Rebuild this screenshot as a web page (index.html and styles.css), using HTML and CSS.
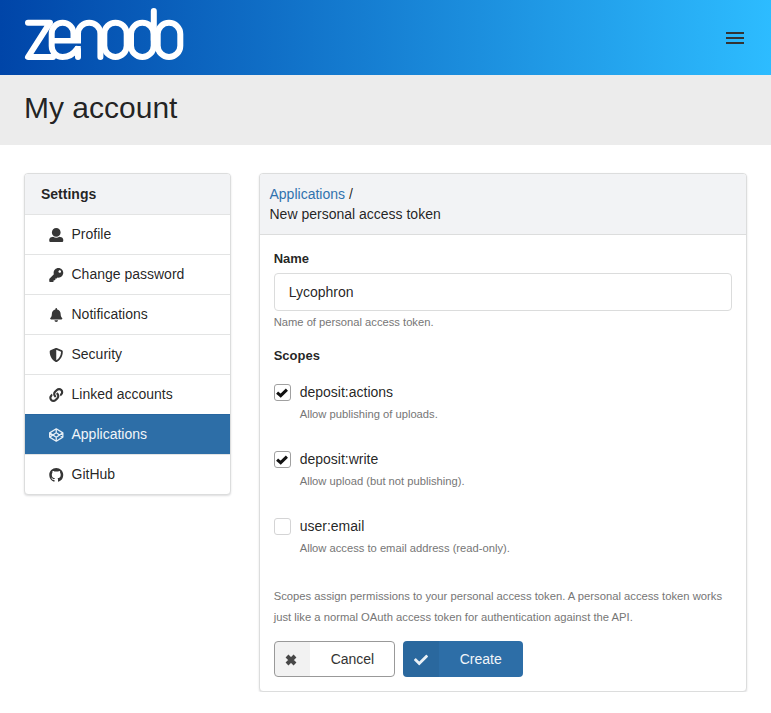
FILE: index.html
```html
<!DOCTYPE html>
<html lang="en">
<head>
<meta charset="utf-8">
<title>New personal access token</title>
<link rel="stylesheet" href="styles.css">
</head>
<body>
<header class="topbar">
  <svg class="logo" width="162" height="56" viewBox="0 0 162 56" role="img" aria-label="zenodo">
    <g fill="none" stroke="#fff" stroke-width="6" stroke-linecap="round" stroke-linejoin="round">
      <path d="M5 16.700H27L5 51H30"/>
      <path d="M50.500 34V27.700A10.900 11 0 0 0 28.700 27.700V40A10.900 11 0 0 0 39.600 51Q48.500 51 54 43"/>
      <path d="M55 34V27.700A11.200 11 0 0 1 77.400 27.700V51"/>
      <path d="M28.700 34.700H58M55 40V46" stroke-width="5.500" stroke-linecap="butt"/>
      <path d="M55 44V51"/>
      <rect x="81.300" y="16.700" width="22.400" height="34.300" rx="11.200"/>
      <rect x="108" y="16.700" width="22.700" height="34.300" rx="11.350"/>
      <path d="M130.800 5V34"/>
      <rect x="134.700" y="16.700" width="22.600" height="34.300" rx="11.300"/>
    </g>
  </svg>
  <button class="menu-toggle" aria-label="Menu"><span></span><span></span><span></span></button>
</header>
<div class="page-title"><h1>My account</h1></div>
<main class="layout">
  <nav class="card sidebar">
    <div class="sidebar-head">Settings</div>
    <a class="item"><svg class="icon" viewBox="0 0 512 512"><path d="M256 0c88.366 0 160 71.634 160 160s-71.634 160-160 160S96 248.366 96 160 167.634 0 256 0zm183.283 333.821l-71.313-17.828c-74.923 53.890-165.738 41.864-223.940 0l-71.313 17.828C29.981 344.505 0 382.903 0 426.955V464c0 26.510 21.490 48 48 48h416c26.510 0 48-21.490 48-48v-37.045c0-44.052-29.981-82.450-72.717-93.134z"/></svg>Profile</a>
    <a class="item"><svg class="icon" viewBox="0 0 512 512"><path d="M512 176.001C512 273.203 433.202 352 336 352c-11.220 0-22.190-1.062-32.827-3.069l-24.012 27.014A23.999 23.999 0 0 1 261.223 384H224v40c0 13.255-10.745 24-24 24h-40v40c0 13.255-10.745 24-24 24H24c-13.255 0-24-10.745-24-24v-78.059c0-6.365 2.529-12.470 7.029-16.971l161.802-161.802C163.108 213.814 160 195.271 160 176 160 78.798 238.797.001 335.999 0 433.488-.001 512 78.511 512 176.001zM336 128c0 26.510 21.490 48 48 48s48-21.490 48-48-21.490-48-48-48-48 21.490-48 48z"/></svg>Change password</a>
    <a class="item"><svg class="icon" viewBox="0 0 448 512"><path d="M224 512c35.320 0 63.970-28.650 63.970-64H160.030c0 35.350 28.650 64 63.970 64zm215.390-149.710c-19.320-20.760-55.470-51.990-55.470-154.290 0-77.700-54.480-139.900-127.940-155.160V32c0-17.670-14.320-32-31.980-32s-31.980 14.330-31.980 32v20.840C118.560 68.100 64.080 130.300 64.080 208c0 102.300-36.150 133.530-55.470 154.290-6 6.450-8.660 14.160-8.610 21.710.11 16.400 12.980 32 32.100 32h383.800c19.120 0 32-15.600 32.100-32 .05-7.550-2.610-15.270-8.610-21.710z"/></svg>Notifications</a>
    <a class="item"><svg class="icon" viewBox="0 0 512 512"><path d="M466.500 83.700l-192-80a48.150 48.150 0 0 0-36.900 0l-192 80C27.700 91.100 16 108.600 16 128c0 198.500 114.500 335.700 221.500 380.300 11.800 4.900 25.100 4.900 36.900 0C360.100 472.600 496 349.300 496 128c0-19.400-11.700-36.900-29.500-44.300zM256.100 446.300l-.1-381 175.900 73.300c-3.300 151.400-82.100 261.100-175.800 307.700z"/></svg>Security</a>
    <a class="item"><svg class="icon" viewBox="0 0 512 512"><path d="M326.612 185.391c59.747 59.809 58.927 155.698.36 214.590-.11.12-.24.25-.36.37l-67.200 67.200c-59.270 59.270-155.699 59.262-214.960 0-59.270-59.260-59.270-155.700 0-214.960l37.106-37.106c9.840-9.840 26.786-3.300 27.294 10.606.648 17.722 3.826 35.527 9.690 52.721 1.986 5.822.567 12.262-3.783 16.612l-13.087 13.087c-28.026 28.026-28.905 73.660-1.155 101.960 28.024 28.579 74.086 28.749 102.325.51l67.200-67.190c28.191-28.191 28.073-73.757 0-101.830-3.701-3.694-7.429-6.564-10.341-8.569a16.037 16.037 0 0 1-6.947-12.606c-.396-10.567 3.348-21.456 11.698-29.806l21.054-21.055c5.521-5.521 14.182-6.199 20.584-1.731a152.482 152.482 0 0 1 20.522 17.197zM467.547 44.449c-59.261-59.262-155.690-59.270-214.960 0l-67.200 67.200c-.12.12-.25.25-.36.37-58.566 58.892-59.387 154.781.36 214.590a152.454 152.454 0 0 0 20.521 17.196c6.402 4.468 15.064 3.789 20.584-1.731l21.054-21.055c8.350-8.350 12.094-19.239 11.698-29.806a16.037 16.037 0 0 0-6.947-12.606c-2.912-2.005-6.640-4.875-10.341-8.569-28.073-28.073-28.191-73.639 0-101.830l67.200-67.190c28.239-28.239 74.300-28.069 102.325.51 27.750 28.300 26.872 73.934-1.155 101.960l-13.087 13.087c-4.350 4.350-5.769 10.790-3.783 16.612 5.864 17.194 9.042 34.999 9.690 52.721.509 13.906 17.454 20.446 27.294 10.606l37.106-37.106c59.271-59.259 59.271-155.699.001-214.959z"/></svg>Linked accounts</a>
    <a class="item active"><svg class="icon codepen" viewBox="0 0 14 14"><path d="M7 .8L13.600 4.900V9.100L7 13.200.4 9.100V4.900ZM7 .8V4.800M7 9.200V13.200M.4 4.900L7 9.200 13.600 4.900M.4 9.100L7 4.800 13.600 9.100"/></svg>Applications</a>
    <a class="item"><svg class="icon" viewBox="0 0 16 16"><path d="M8 0C3.580 0 0 3.580 0 8c0 3.540 2.290 6.530 5.470 7.590.4.07.55-.17.55-.38 0-.19-.01-.82-.01-1.490-2.010.37-2.530-.49-2.690-.94-.09-.23-.48-.94-.82-1.130-.28-.15-.68-.52-.01-.53.63-.01 1.080.58 1.230.82.72 1.210 1.870.87 2.330.66.07-.52.28-.87.51-1.070-1.780-.2-3.640-.89-3.640-3.950 0-.87.31-1.590.82-2.150-.08-.2-.36-1.020.08-2.120 0 0 .67-.21 2.200.82.64-.18 1.320-.27 2-.27s1.360.09 2 .27c1.530-1.040 2.200-.82 2.200-.82.44 1.100.16 1.920.08 2.120.51.56.82 1.270.82 2.150 0 3.070-1.870 3.750-3.650 3.950.29.25.54.73.54 1.480 0 1.070-.01 1.930-.01 2.200 0 .21.15.46.55.38A8.010 8.010 0 0 0 16 8c0-4.420-3.580-8-8-8z"/></svg>GitHub</a>
  </nav>
  <section class="card panel">
    <div class="panel-head"><a class="link">Applications</a> /<br>New personal access token</div>
    <form class="panel-body">
      <label class="label" for="name">Name</label>
      <input class="input" id="name" type="text" value="Lycophron">
      <p class="help name-help">Name of personal access token.</p>
      <div class="label scopes-label">Scopes</div>
      <div class="scope">
        <span class="box checked"><svg viewBox="0 0 12 10"><path d="M1.100 4.600L4.700 7.700 10.900 1.700"/></svg></span>
        <div><div class="scope-name">deposit:actions</div><p class="help">Allow publishing of uploads.</p></div>
      </div>
      <div class="scope">
        <span class="box checked"><svg viewBox="0 0 12 10"><path d="M1.100 4.600L4.700 7.700 10.900 1.700"/></svg></span>
        <div><div class="scope-name">deposit:write</div><p class="help">Allow upload (but not publishing).</p></div>
      </div>
      <div class="scope">
        <span class="box"></span>
        <div><div class="scope-name">user:email</div><p class="help">Allow access to email address (read-only).</p></div>
      </div>
      <p class="help note">Scopes assign permissions to your personal access token. A personal access token works just like a normal OAuth access token for authentication against the API.</p>
      <div class="actions">
        <button type="button" class="btn cancel"><span class="btn-icon"><svg class="times" viewBox="0 0 12 12"><path d="M2 2L10 10M10 2L2 10"/></svg></span><span class="btn-text">Cancel</span></button>
        <button type="button" class="btn create"><span class="btn-icon"><svg class="check" viewBox="0 0 512 512"><path d="M173.898 439.404l-166.400-166.400c-9.997-9.997-9.997-26.206 0-36.204l36.203-36.204c9.997-9.998 26.207-9.998 36.204 0L192 312.690 432.095 72.596c9.997-9.997 26.207-9.997 36.204 0l36.203 36.204c9.997 9.997 9.997 26.206 0 36.204l-294.400 294.401c-9.998 9.997-26.207 9.997-36.204-.001z"/></svg></span><span class="btn-text">Create</span></button>
      </div>
    </form>
  </section>
</main>
</body>
</html>
```
FILE: styles.css
```css
* { box-sizing: border-box; }
body {
  margin: 0;
  background: #fff;
  color: rgba(0, 0, 0, .87);
  font: 14px/20px "Liberation Sans", Arial, sans-serif;
}
p, h1 { margin: 0; }
.topbar {
  height: 75px;
  padding: 0 27px 0 23px;
  display: flex;
  align-items: center;
  justify-content: space-between;
  background: linear-gradient(90deg, #0045a8, #2dbcff);
}
.logo { display: block; margin-top: -7px; }
.menu-toggle {
  display: flex;
  flex-direction: column;
  gap: 3px;
  padding: 0;
  border: 0;
  background: none;
}
.menu-toggle span { width: 18px; height: 2px; background: #333; }
.page-title {
  height: 70px;
  padding: 15px 24px;
  background: #ececec;
}
h1 { font-size: 30px; line-height: 36px; font-weight: 400; }
.layout {
  display: grid;
  grid-template-columns: 207px 488px;
  gap: 28px;
  align-items: start;
  padding: 28px 24px 0;
}
.card {
  border: 1px solid #dcdddd;
  border-radius: 4px;
  background: #fff;
  box-shadow: 0 1px 2px rgba(34, 36, 38, .15);
  overflow: hidden;
}
.sidebar-head {
  height: 40px;
  padding: 10px 16px;
  background: #f2f3f5;
  font-weight: 700;
}
.item {
  display: flex;
  align-items: center;
  height: 40px;
  padding: 0 24px 2px;
  border-top: 1px solid #e3e4e4;
}
.icon { width: 14.500px; height: 14px; margin: 2px 8px 0 0; fill: #363636; }
.active { background: #2d6ea7; border-color: #2766a0; color: #f1f5f9; }
.codepen { overflow: visible; fill: none; stroke: #e6eef5; stroke-width: 1.300; stroke-linejoin: round; }
.panel-head {
  height: 61px;
  padding: 10px 9.500px;
  background: #f2f3f5;
  border-bottom: 1px solid #dcdddd;
}
.link { color: #3072ae; }
.panel-body { padding: 14px 14px 14px 13.700px; }
.label { display: block; font-size: 13px; font-weight: 700; line-height: 20px; }
.input {
  display: block;
  width: 100%;
  height: 38px;
  margin-top: 4px;
  padding: 0 14px;
  border: 1px solid #dbdcdc;
  border-radius: 4px;
  color: inherit;
  font: inherit;
}
.help { color: #767676; font-size: 11.200px; line-height: 21px; }
.name-help { margin-top: 1px; }
.scopes-label { margin: 13px 0 16px; }
.scope { display: flex; gap: 9px; height: 67px; }
.box {
  width: 17px;
  height: 17px;
  margin-top: 2px;
  border: 1px solid #d4d4d5;
  border-radius: 3px;
  display: flex;
  align-items: center;
  justify-content: center;
}
.checked { border-color: #a0a0a0; }
.box svg { width: 12px; height: 10px; flex: none; fill: none; stroke: #111; stroke-width: 3; overflow: visible; }
.scope-name { height: 22px; }
.note { margin-top: 3px; font-size: 11.240px; }
.actions { display: flex; gap: 8px; margin-top: 13px; }
.btn {
  display: flex;
  align-items: stretch;
  height: 36px;
  padding: 0;
  border: 0;
  border-radius: 4px;
  overflow: hidden;
  font: inherit;
}
.btn-icon { width: 36px; display: flex; align-items: center; justify-content: center; background: rgba(0, 0, 0, .05); }
.btn-text { flex: 1; line-height: 36px; text-align: center; }
.cancel { width: 121px; border: 1px solid #999; background: #fff; color: #333; }
.cancel .btn-icon { width: 35px; padding-right: 1.500px; }
.cancel .btn-text { line-height: 34px; padding-left: 1.500px; }
.create { width: 120px; background: #2d6ea7; color: #f1f5f9; }
.times { width: 12px; height: 12px; margin-top: 2px; stroke: #484848; stroke-width: 4; }
.check { width: 14px; height: 14px; margin-top: 2px; fill: #e9f0f6; }
```
